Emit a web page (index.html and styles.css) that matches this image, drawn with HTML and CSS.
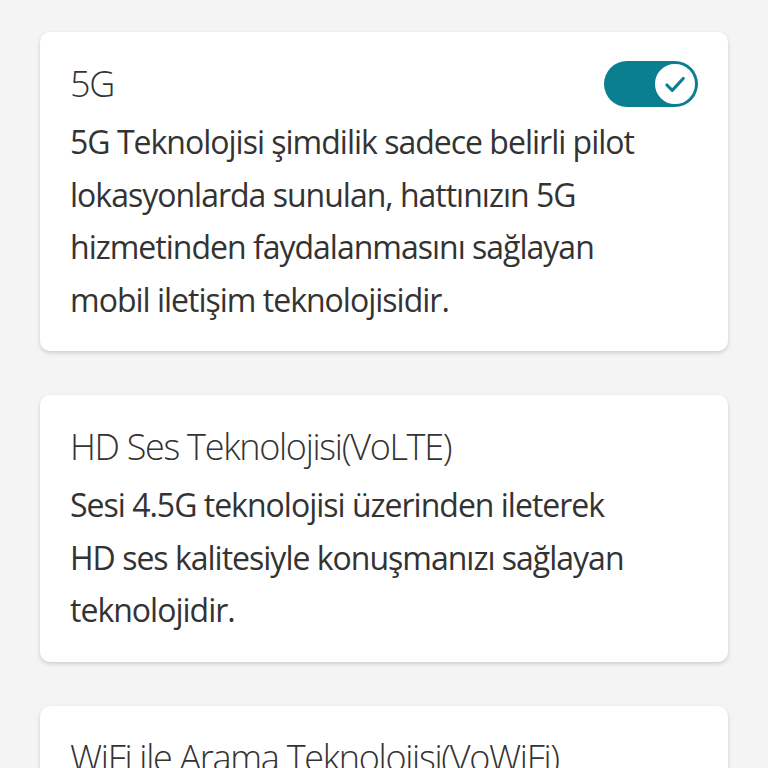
FILE: index.html
```html
<!DOCTYPE html>
<html lang="tr">
<head>
<meta charset="utf-8">
<link rel="stylesheet" href="styles.css">
</head>
<body>
<main class="list">
  <section class="card">
    <div class="card-head">
      <h2 class="title">5G</h2>
      <span class="toggle on">
        <span class="knob">
          <svg viewBox="0 0 24 24" width="30" height="30"><path d="M5.5 12.8l4.3 4.3L18.6 7.6" fill="none" stroke="#0a7f8f" stroke-width="2.5" stroke-linecap="round" stroke-linejoin="round"/></svg>
        </span>
      </span>
    </div>
    <p class="desc">5G Teknolojisi şimdilik sadece belirli pilot<br>lokasyonlarda sunulan, hattınızın 5G<br>hizmetinden faydalanmasını sağlayan<br>mobil iletişim teknolojisidir.</p>
  </section>
  <section class="card">
    <div class="card-head">
      <h2 class="title">HD Ses Teknolojisi(VoLTE)</h2>
    </div>
    <p class="desc">Sesi 4.5G teknolojisi üzerinden ileterek<br>HD ses kalitesiyle konuşmanızı sağlayan<br>teknolojidir.</p>
  </section>
  <section class="card">
    <div class="card-head">
      <h2 class="title">WiFi ile Arama Teknolojisi(VoWiFi)</h2>
    </div>
    <p class="desc">WiFi üzerinden arama yapmanızı<br>sağlayan teknolojidir.</p>
  </section>
</main>
</body>
</html>
```
FILE: styles.css
```css
html, body {
  margin: 0;
  padding: 0;
  background: #f4f4f4;
}
body {
  font-family: "Open Sans", "Noto Sans", sans-serif;
  color: #333333;
  height: 768px;
  overflow: hidden;
}
.list {
  display: flex;
  flex-direction: column;
  gap: 44px;
  padding: 32px 40px;
}
.card {
  background: #ffffff;
  border-radius: 10px;
  box-shadow: 0 2px 4px rgba(0, 0, 0, 0.16);
  padding: 28px 30px 25px;
}
.card-head {
  display: flex;
  align-items: center;
  justify-content: space-between;
}
.title {
  margin: 0;
  font-size: 36px;
  font-weight: 300;
  line-height: 48px;
  letter-spacing: -1.3px;
  color: #333333;
}
.desc {
  margin: 8px 0 0;
  font-size: 32px;
  font-weight: 400;
  line-height: 52.5px;
  letter-spacing: -1px;
}
.toggle {
  display: flex;
  align-items: center;
  justify-content: flex-end;
  width: 94px;
  height: 46px;
  border-radius: 23px;
  background: #0a7f8f;
  padding: 1px;
  box-sizing: border-box;
}
.knob {
  width: 44px;
  height: 44px;
  border-radius: 50%;
  background: #ffffff;
  border: 2px solid #0a7f8f;
  box-sizing: border-box;
  display: flex;
  align-items: center;
  justify-content: center;
}
```
